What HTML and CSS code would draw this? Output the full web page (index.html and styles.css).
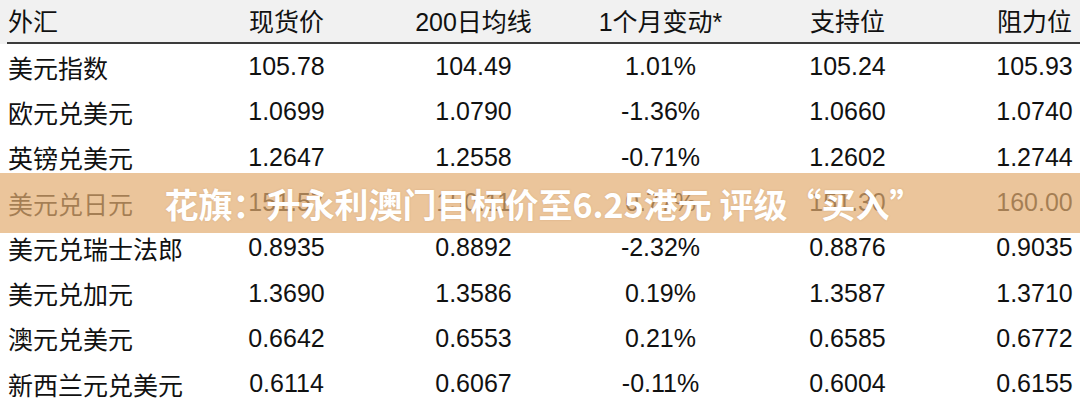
FILE: index.html
```html
<!DOCTYPE html>
<html lang="zh-CN">
<head>
<meta charset="utf-8">
<title>外汇</title>
<link rel="stylesheet" href="styles.css">
</head>
<body>
<div class="page">
  <div class="table">
    <div class="row head">
      <div class="cell first">外汇</div>
      <div class="cell">现货价</div>
      <div class="cell">200日均线</div>
      <div class="cell">1个月变动*</div>
      <div class="cell">支持位</div>
      <div class="cell">阻力位</div>
    </div>
    <div class="row"><div class="cell first">美元指数</div><div class="cell">105.78</div><div class="cell">104.49</div><div class="cell">1.01%</div><div class="cell">105.24</div><div class="cell">105.93</div></div>
    <div class="row"><div class="cell first">欧元兑美元</div><div class="cell">1.0699</div><div class="cell">1.0790</div><div class="cell">-1.36%</div><div class="cell">1.0660</div><div class="cell">1.0740</div></div>
    <div class="row"><div class="cell first">英镑兑美元</div><div class="cell">1.2647</div><div class="cell">1.2558</div><div class="cell">-0.71%</div><div class="cell">1.2602</div><div class="cell">1.2744</div></div>
    <div class="row"><div class="cell first">美元兑日元</div><div class="cell">151.57</div><div class="cell">150.11</div><div class="cell">0.77%</div><div class="cell">151.30</div><div class="cell">160.00</div></div>
    <div class="row"><div class="cell first">美元兑瑞士法郎</div><div class="cell">0.8935</div><div class="cell">0.8892</div><div class="cell">-2.32%</div><div class="cell">0.8876</div><div class="cell">0.9035</div></div>
    <div class="row"><div class="cell first">美元兑加元</div><div class="cell">1.3690</div><div class="cell">1.3586</div><div class="cell">0.19%</div><div class="cell">1.3587</div><div class="cell">1.3710</div></div>
    <div class="row"><div class="cell first">澳元兑美元</div><div class="cell">0.6642</div><div class="cell">0.6553</div><div class="cell">0.21%</div><div class="cell">0.6585</div><div class="cell">0.6772</div></div>
    <div class="row"><div class="cell first">新西兰元兑美元</div><div class="cell">0.6114</div><div class="cell">0.6067</div><div class="cell">-0.11%</div><div class="cell">0.6004</div><div class="cell">0.6155</div></div>
  </div>
  <div class="banner"><span class="banner-text">花旗：升永利澳门目标价至6.25港元 评级“买入”</span></div>
</div>
</body>
</html>
```

FILE: styles.css
```css
html, body {
  margin: 0;
  padding: 0;
  background: #ffffff;
  overflow: hidden;
}
.page {
  position: relative;
  width: 1080px;
  height: 408px;
  overflow: hidden;
  font-family: "Liberation Sans", Arial, "Noto Sans CJK SC", sans-serif;
  color: #111111;
}
.table {
  display: flex;
  flex-direction: column;
}
.row {
  display: grid;
  grid-template-columns: 185px 187px 187px 187px 187px 187px;
  padding-left: 8px;
  height: 45.3px;
  align-items: center;
  font-size: 25px;
  white-space: nowrap;
}
.row.head {
  height: 42px;
  background: #f1f1f1;
  border-bottom: 2px solid #3c3c3c;
  margin-left: 7px;
  padding-left: 1px;
  box-shadow: -7px 0 0 #f1f1f1;
}
.head .cell {
  padding-bottom: 2px;
}
.cell {
  text-align: center;
}
.cell.first {
  text-align: left;
}
.banner {
  position: absolute;
  left: 0;
  top: 173px;
  width: 1080px;
  height: 60px;
  background: rgba(226, 172, 112, 0.7);
  display: flex;
  align-items: center;
  justify-content: center;
  padding-left: 8px;
  box-sizing: border-box;
}
.banner-text {
  font-family: "Noto Sans CJK SC", "Noto Sans", sans-serif;
  font-weight: 700;
  font-size: 34px;
  color: #ffffff;
  white-space: nowrap;
  text-shadow: 0 0 2px rgba(150, 100, 50, 0.25);
}
```
